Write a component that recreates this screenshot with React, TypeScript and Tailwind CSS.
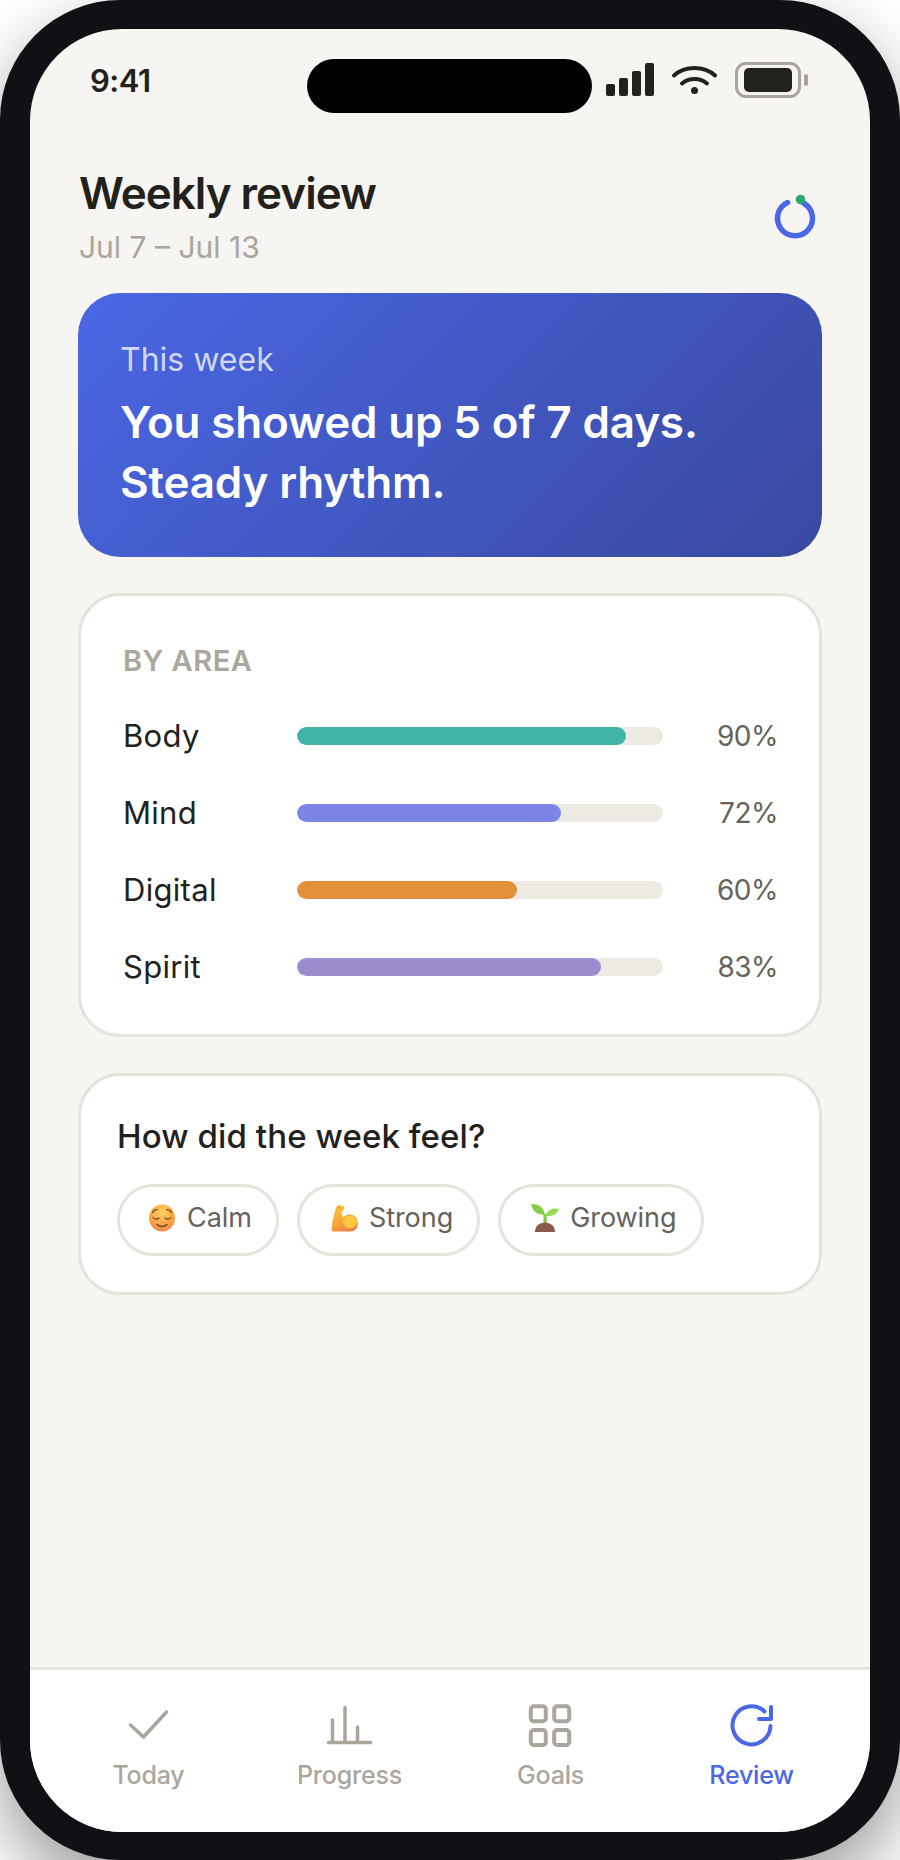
import React from 'react'

const areas = [
  { name: 'Body', pct: 90, bar: 'bg-[#41b6a8]' },
  { name: 'Mind', pct: 72, bar: 'bg-[#7c85e6]' },
  { name: 'Digital', pct: 60, bar: 'bg-[#e29039]' },
  { name: 'Spirit', pct: 83, bar: 'bg-[#9d8bd0]' },
]

function CalmFace() {
  return (
    <svg width="28" height="28" viewBox="0 0 28 28" fill="none">
      <defs>
        <radialGradient id="calm" cx="0.5" cy="0.3" r="0.8">
          <stop offset="0" stopColor="#ffd15c" />
          <stop offset="0.6" stopColor="#fba243" />
          <stop offset="1" stopColor="#f27b55" />
        </radialGradient>
      </defs>
      <ellipse cx="14" cy="14" rx="13" ry="13.5" fill="url(#calm)" />
      <g stroke="#6b3f2a" strokeWidth="1.2" strokeLinecap="round">
        <path d="M4.5 8.5C5.5 6.5 7.5 5.5 9.5 5.5" />
        <path d="M23.5 8.5C22.5 6.5 20.5 5.5 18.5 5.5" />
        <path d="M5 13.5C6.5 15.5 9.5 15.5 11 14" />
        <path d="M23 13.5C21.5 15.5 18.5 15.5 17 14" />
        <path d="M9 20.5C11.5 23 16.5 23 19 20.5" strokeWidth="1.5" />
      </g>
    </svg>
  )
}

function Muscle() {
  return (
    <svg width="28" height="28" viewBox="0 0 28 28" fill="none">
      <defs>
        <linearGradient id="arm" x1="0" y1="0" x2="0.4" y2="1">
          <stop offset="0" stopColor="#fdc13c" />
          <stop offset="0.7" stopColor="#f9a531" />
          <stop offset="1" stopColor="#ef8447" />
        </linearGradient>
      </defs>
      <path d="M6 3.5C7.5 0.5 13 0.5 14 3C14.5 5 13 7 11.5 7.5C11.5 10 12 12 13 14C15 10 21 9.5 25 12.5C28.5 15.5 28.5 22 26 25C25 27 22 27.5 19 27.5H4C2 27.5 1 26 1.5 24C2.5 17 4 10 6 3.5Z" fill="url(#arm)" />
      <ellipse cx="20" cy="18" rx="7" ry="6.5" fill="#fdc941" />
      <circle cx="9" cy="3.5" r="1" fill="#e98a35" />
    </svg>
  )
}

function Sprout() {
  return (
    <svg width="28" height="28" viewBox="0 0 28 28" fill="none">
      <path d="M12.5 10H15.5L16 20H12.5Z" fill="#7fcb3f" />
      <path d="M0 0.5C5 -0.5 12 1.5 13.5 9C14 11 12.5 11 10.5 10.5C5 10 1.5 6 0 0.5Z" fill="#82cf45" />
      <path d="M28 5C24 3.5 17.5 4.5 15 10.5C15 12 16.5 12.5 18 12C22.5 12 26 9.5 28 5Z" fill="#97d957" />
      <path d="M4 28C4 22 8.5 18.5 14 18.5C19.5 18.5 24 22 24 28Z" fill="#8a5a4c" />
    </svg>
  )
}

const moods = [
  { icon: <CalmFace />, label: 'Calm', pad: 'pl-[28px]' },
  { icon: <Muscle />, label: 'Strong', pad: 'pl-[30px]' },
  { icon: <Sprout />, label: 'Growing', pad: 'pl-[30px]' },
]

function StatusIcons() {
  return (
    <div className="flex items-center">
      <svg width="48" height="34" viewBox="0 0 48 34" fill="#23211c">
        <rect x="0" y="21" width="9" height="12" rx="2" />
        <rect x="13" y="15" width="9" height="18" rx="2" />
        <rect x="26" y="8" width="9" height="25" rx="2" />
        <rect x="39" y="0" width="9" height="33" rx="2" />
      </svg>
      <svg className="ml-[18px]" width="45" height="30" viewBox="0 0 45 30" fill="none" stroke="#23211c" strokeWidth="4" strokeLinecap="round">
        <path d="M2 10.5C13 0.5 32 0.5 43 10.5" />
        <path d="M10 18.5C17 12.5 28 12.5 35 18.5" />
        <circle cx="22.5" cy="25.5" r="3.5" fill="#23211c" stroke="none" />
      </svg>
      <div className="ml-[18px] flex h-[36px] w-[66px] items-center justify-center rounded-[11px] border-[3px] border-[#a8a49b]">
        <div className="h-[24px] w-[48px] rounded-[5px] bg-[#23211c]" />
      </div>
      <div className="ml-[3px] h-[12px] w-[4.5px] rounded-[2px] bg-[#a8a49b]" />
    </div>
  )
}

function Tab({ label, active, children }: { label: string; active?: boolean; children: React.ReactNode }) {
  return (
    <div className={`flex flex-col items-center ${active ? 'text-[#4a67e5]' : 'text-[#aaa69d]'}`}>
      <div className="h-[50px] w-[50px]">{children}</div>
      <span className="mt-[8px] text-[25px] leading-[30px] font-medium tracking-[-0.2px]">{label}</span>
    </div>
  )
}

export default function App() {
  return (
    <div className="h-[1860px] w-[900px] overflow-hidden bg-white font-['Inter',sans-serif]">
      <div className="h-[1860px] w-[900px] rounded-[120px] bg-[#0f1115] pt-[29px] pr-[30px] pb-[28px] pl-[30px] shadow-[0_30px_70px_rgba(0,0,0,0.4)]">
        <div className="relative flex h-full flex-col overflow-hidden rounded-[92px] bg-[#f6f5f1] text-[#23211c]">
          <div className="absolute top-[30px] left-[277px] h-[54px] w-[285px] rounded-[27px] bg-black" />

          <div className="flex h-[69px] items-start justify-between pt-[33px] pr-[62px] pl-[60px]">
            <span className="text-[31px] leading-[37px] font-semibold tracking-[-0.5px]">9:41</span>
            <StatusIcons />
          </div>

          <div className="flex flex-col px-[48px]">
            <div className="mt-[69px] flex items-center justify-between">
              <div className="pl-px">
                <h1 className="text-[44px] leading-[52px] font-semibold tracking-[-1px]">Weekly review</h1>
                <p className="mt-[10px] text-[30px] leading-[36px] text-[#aaa69d]">Jul 7 – Jul 13</p>
              </div>
              <svg className="mt-[3px] mr-[5px]" width="46" height="50" viewBox="0 0 46 50" fill="none">
                <path d="M16.5 9.5A17.5 17.5 0 1 0 32.5 10" stroke="#4a67e5" strokeWidth="5.5" strokeLinecap="round" />
                <circle cx="29.5" cy="6.5" r="4.8" fill="#2fa96b" />
              </svg>
            </div>

            <div className="mt-[28px] flex h-[264px] flex-col rounded-[42px] bg-[linear-gradient(135deg,#4a67e5,#39499f)] px-[42px] pt-[49px] text-white">
              <p className="text-[32px] leading-[36px] text-white/75">This week</p>
              <p className="mt-[14px] text-[44px] leading-[60px] font-semibold tracking-[-0.15px]">
                You showed up 5 of 7 days.
                <br />
                Steady rhythm.
              </p>
            </div>

            <div className="mt-[36px] h-[444px] rounded-[42px] border-[3px] border-[#e6e3da] bg-white pt-[49px] pr-[41px] pl-[42px]">
              <p className="text-[29px] leading-[32px] font-semibold tracking-[0.5px] text-[#aaa69d]">BY AREA</p>
              <div className="mt-[41px] flex flex-col gap-[41px]">
                {areas.map((a) => (
                  <div key={a.name} className="flex h-[36px] items-center">
                    <span className="w-[174px] text-[31px] leading-[36px] font-normal tracking-[0.3px]">{a.name}</span>
                    <div className="h-[18px] w-[366px] overflow-hidden rounded-[9px] bg-[#edeae4]">
                      <div className={`h-full rounded-[9px] ${a.bar}`} style={{ width: `${a.pct}%` }} />
                    </div>
                    <span className="flex-1 text-right text-[28px] leading-[36px] tracking-[-0.5px] text-[#66635b]">{a.pct}%</span>
                  </div>
                ))}
              </div>
            </div>

            <div className="mt-[36px] h-[222px] rounded-[42px] border-[3px] border-[#e6e3da] bg-white pt-[41px] pl-[36px]">
              <p className="text-[33px] leading-[38px] font-medium tracking-[0.1px]">How did the week feel?</p>
              <div className="mt-[29px] flex gap-[18px]">
                {moods.map((m) => (
                  <div key={m.label} className={`flex h-[72px] items-center gap-[11px] rounded-[36px] border-[3px] border-[#e6e3da] pr-[24px] pb-[5px] ${m.pad}`}>
                    {m.icon}
                    <span className="text-[27px] leading-[36px] font-normal tracking-[-0.05px] text-[#66635b]">{m.label}</span>
                  </div>
                ))}
              </div>
            </div>
          </div>

          <div className="mt-auto grid h-[165px] grid-cols-4 border-t-[3px] border-[#e6e3da] bg-white px-[18px] pt-[32px]">
            <Tab label="Today">
              <svg width="50" height="50" viewBox="0 0 50 50" fill="none" stroke="currentColor" strokeWidth="3.5" strokeLinecap="round" strokeLinejoin="round">
                <path d="M6.5 23L19.5 35L42.5 10" />
              </svg>
            </Tab>
            <Tab label="Progress">
              <svg width="50" height="50" viewBox="0 0 50 50" fill="none" stroke="currentColor" strokeWidth="3.5" strokeLinecap="round">
                <path d="M3.5 40.5H45.5M7.5 40V18M20 40V5.5M32.5 40V25" />
              </svg>
            </Tab>
            <Tab label="Goals">
              <svg width="50" height="50" viewBox="0 0 50 50" fill="none" stroke="currentColor" strokeWidth="4">
                <rect x="4.8" y="4.3" width="15" height="15" rx="3" />
                <rect x="28.2" y="4.3" width="15" height="15" rx="3" />
                <rect x="4.8" y="28" width="15" height="15" rx="3" />
                <rect x="28.2" y="28" width="15" height="15" rx="3" />
              </svg>
            </Tab>
            <Tab label="Review" active>
              <svg width="50" height="50" viewBox="0 0 50 50" fill="none" stroke="currentColor" strokeWidth="4" strokeLinecap="round" strokeLinejoin="round">
                <path d="M43.5 24A19 19 0 1 1 37.5 9.5" />
                <path d="M44 5V17H32" />
              </svg>
            </Tab>
          </div>
        </div>
      </div>
    </div>
  )
}
